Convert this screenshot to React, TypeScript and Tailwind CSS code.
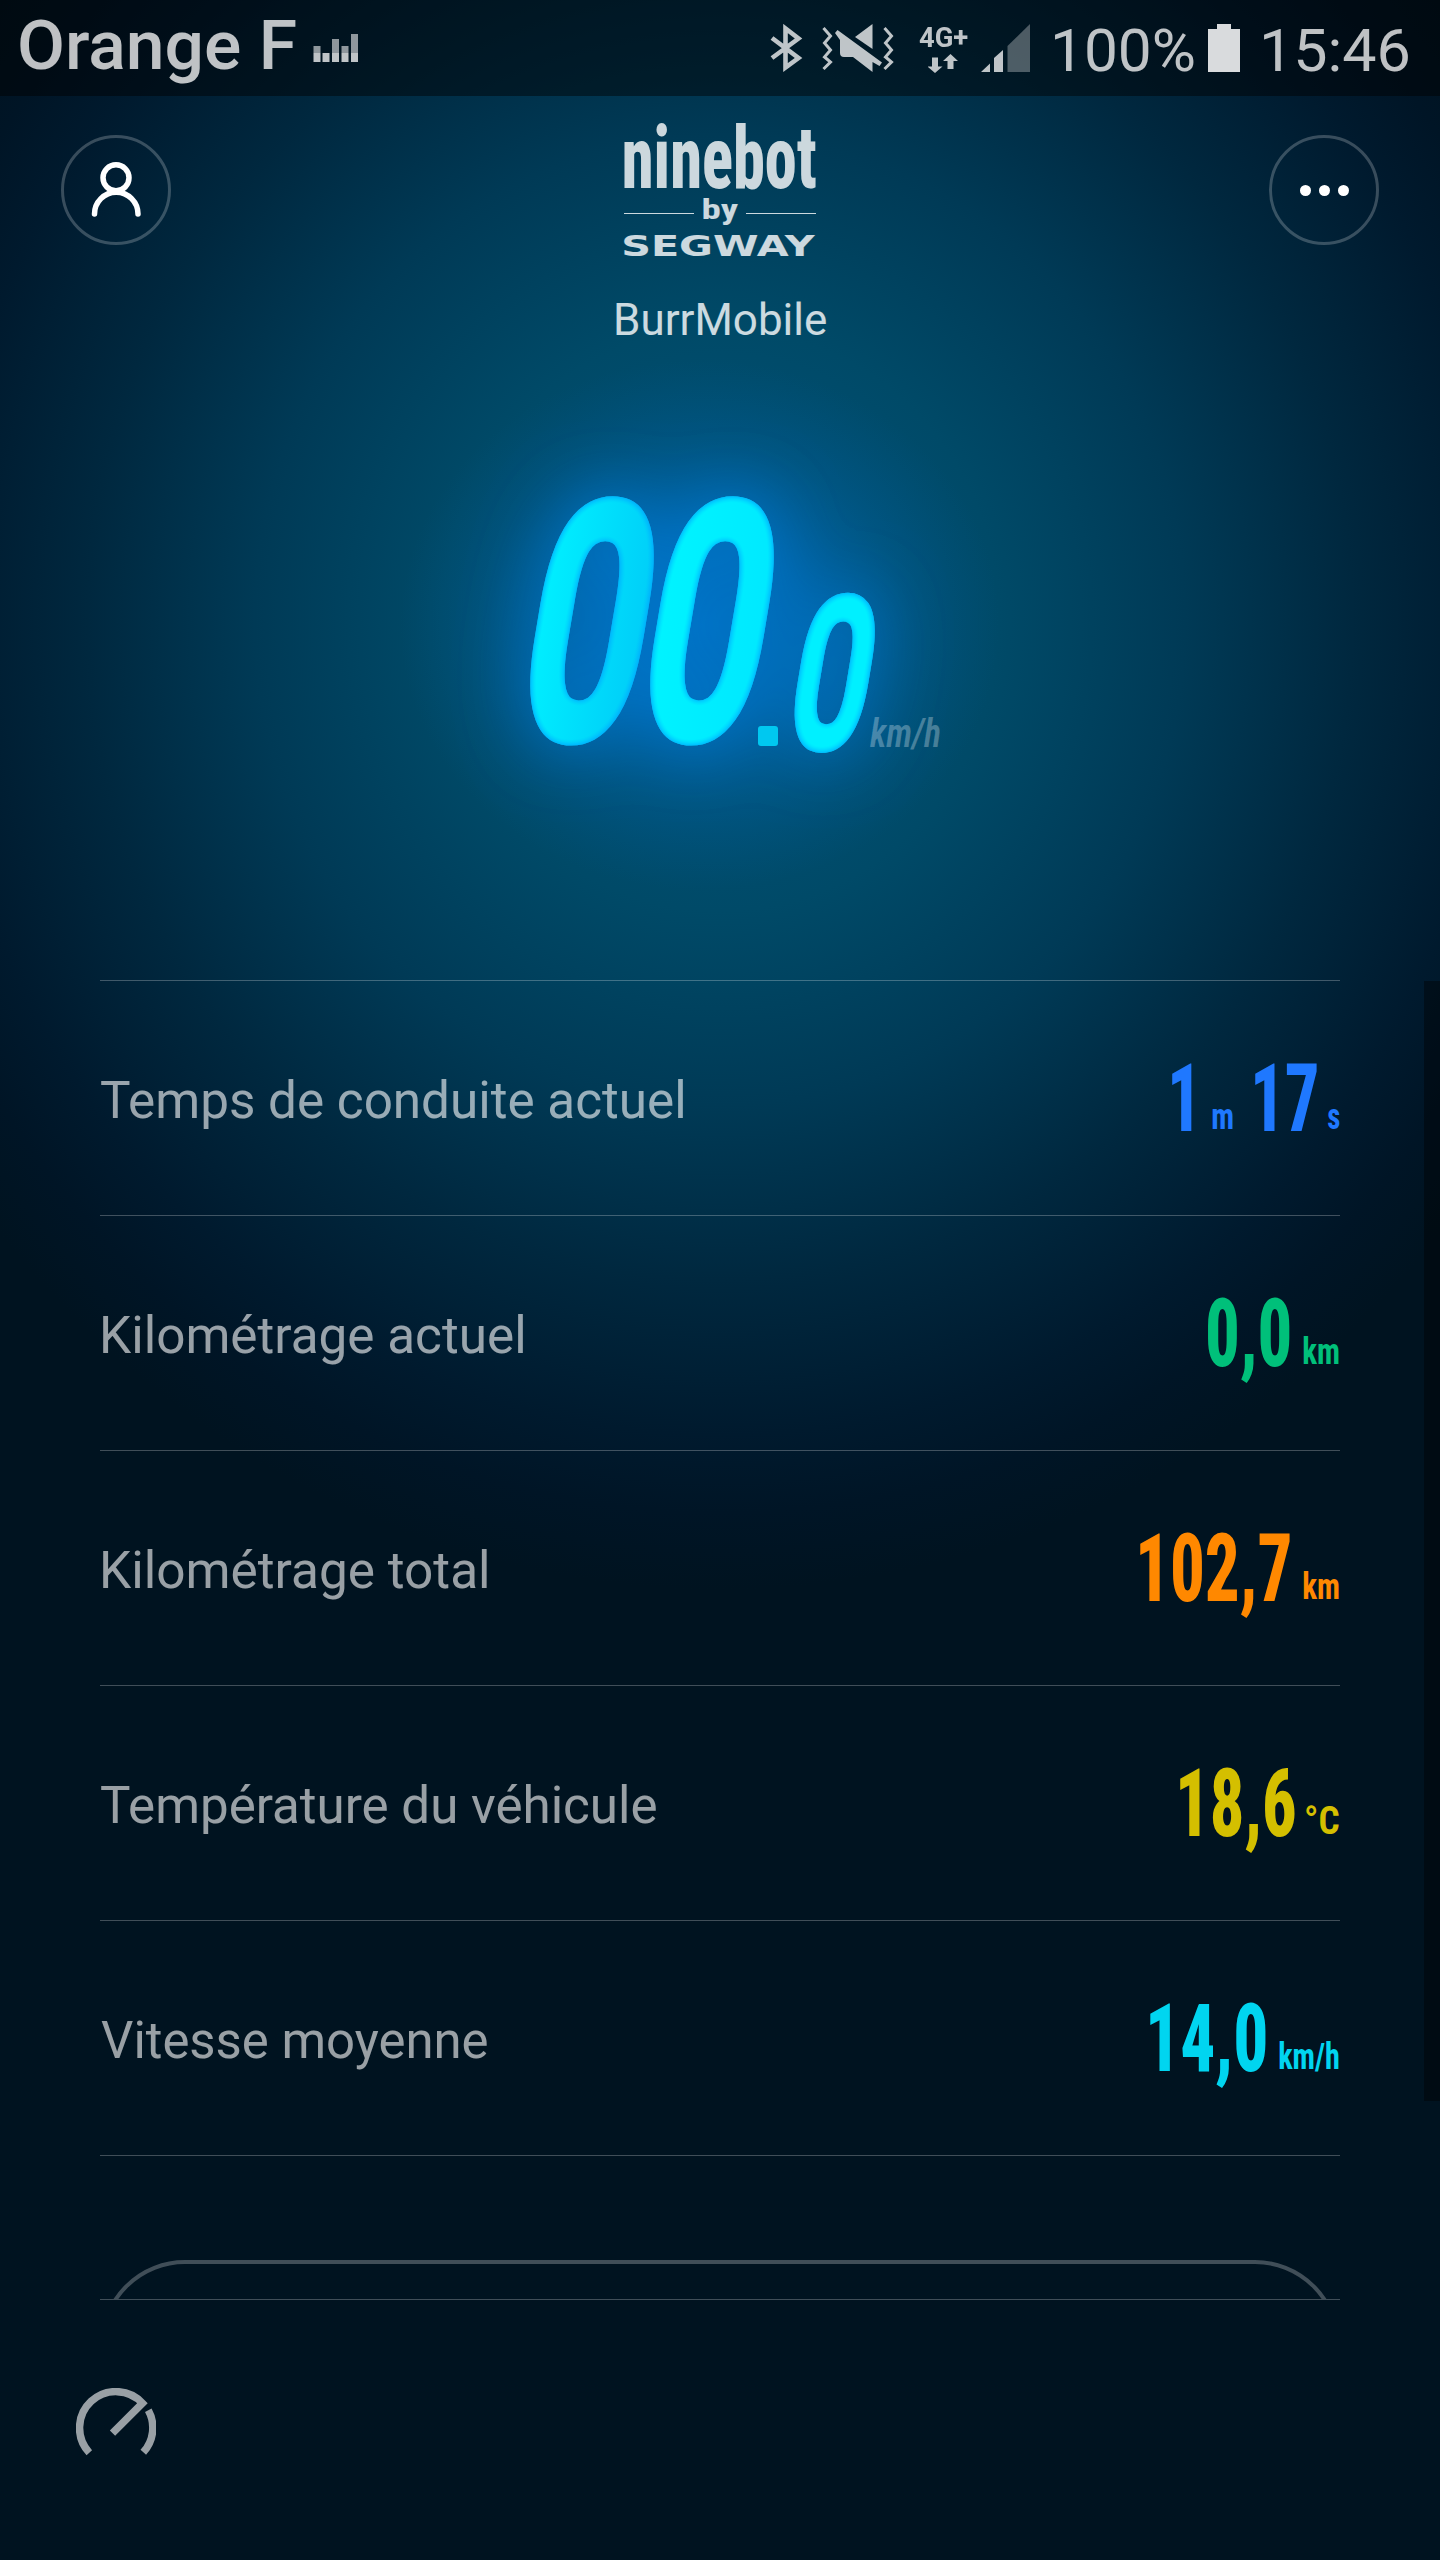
import { useLayoutEffect, useRef } from 'react'

type InkProps = { text: string; width: number; className?: string }

/** Text whose visible glyphs are stretched to fill exactly `width` pixels. */
function Ink({ text, width, className = '' }: InkProps) {
  const ref = useRef<HTMLSpanElement>(null)
  useLayoutEffect(() => {
    const el = ref.current
    if (!el) return
    const cs = getComputedStyle(el)
    const ctx = document.createElement('canvas').getContext('2d')
    if (!ctx) return
    ctx.font = `${cs.fontStyle} ${cs.fontWeight} ${cs.fontSize} ${cs.fontFamily}`
    const m = ctx.measureText(text)
    const left = -m.actualBoundingBoxLeft
    const scale = width / (m.actualBoundingBoxRight - left)
    el.style.transform = `translateX(${-left * scale}px) scaleX(${scale})`
  }, [text, width])
  return (
    <span className={`block leading-none ${className}`} style={{ width }}>
      <span ref={ref} className="inline-block origin-left whitespace-pre">
        {text}
      </span>
    </span>
  )
}

function StatusBar() {
  return (
    <div className="flex h-24 items-start bg-black/45 pl-5 pr-8 font-['Roboto',sans-serif] text-white/75">
      <Ink text="Orange F" width={276} className="mt-[11px] text-[69px] font-medium" />
      <svg className="ml-[17px] mt-[34px] h-7 w-[46px]" viewBox="0 0 46 28" fill="currentColor">
        <path d="M.5 12h7v7h-7zM19 5h7v14h-7zM28.500 12h7v7h-7zM38 0h7v19h-7z" opacity=".75" />
        <path d="M.5 19h7v9h-7zM9.500 19h7v9h-7zM19 19h7v9h-7zM28.500 19h7v9h-7zM38 19h7v9h-7z" />
      </svg>
      <div className="ml-auto flex items-start">
        <svg className="mt-6 h-12 w-[33px]" viewBox="0 0 33 48" fill="none" stroke="currentColor" strokeWidth="4.600">
          <path d="M2 14 28.500 34 15.500 43.500V4.500L28.500 14.500 2 34" />
        </svg>
        <svg className="ml-[19px] mt-6 h-12 w-[72px]" viewBox="0 0 72 48" fill="currentColor">
          <g fill="none" stroke="currentColor" strokeWidth="3">
            <path d="m1.500 4 7 8-6 7 6 7-6 7 6 5-7 7" />
            <path d="m62.500 4 7 8-6 7 6 7-6 7 6 5-7 7" />
          </g>
          <path d="M50.500 0v25L33 13z" />
          <path d="M13 9 15.500 6 60 38.500 57.500 42l-7-4v10L31 33H22q-4 0-4-4V16z" />
        </svg>
        <div className="ml-[25px] mt-6 flex w-[49px] flex-col">
          <Ink text="4G+" width={49} className="text-[28px] font-bold" />
          <svg className="ml-[9px] mt-[2px] h-[19px] w-[30px]" viewBox="0 0 30 19" fill="currentColor">
            <path d="M4 3.500h6v9h4.500L7 19-.500 12.500H4zM19.500 15V7H15l7.500-7L30 7h-4.500v8z" />
          </svg>
        </div>
        <svg className="ml-[13px] mt-6 h-12 w-[49px]" viewBox="0 0 49 48" fill="currentColor">
          <path d="M0 48 9 39.500V48zM13 48V34l9-8v22z" />
          <path d="M26.500 48V22L49 0v48z" opacity=".4" />
        </svg>
        <Ink text="100%" width={139} className="ml-[25px] mt-[21px] text-[60px]" />
        <svg className="ml-[14px] mt-6 h-12 w-8 text-white/85" viewBox="0 0 32 48" fill="currentColor">
          <path d="M9 0h14v5h9v43H0V5h9z" />
        </svg>
        <Ink text="15:46" width={144} className="ml-6 mt-[21px] text-[60px]" />
      </div>
    </div>
  )
}

function Logo() {
  return (
    <div className="flex w-48 flex-col font-['Roboto_Condensed',sans-serif] text-white/80">
      <Ink text="ninebot" width={192} className="mt-[19px] text-[87px] font-extrabold" />
      <div className="-mt-[5px] flex items-start justify-between">
        <div className="mt-[16px] h-px w-[70px] bg-white/80" />
        <Ink text="by" width={35} className="text-[27px] font-bold" />
        <div className="mt-[16px] h-px w-[70px] bg-white/80" />
      </div>
      <Ink text="SEGWAY" width={192} className="mt-2 font-['DejaVu_Sans',sans-serif] text-[29px] font-bold" />
    </div>
  )
}

function Header() {
  return (
    <header className="relative z-10 flex h-[246px] items-start justify-between px-[61px]">
      <button className="mt-[39px] grid size-[110px] place-items-center rounded-full border-[3px] border-white/[.22]">
        <svg className="h-14 w-[50px]" viewBox="0 0 50 56" fill="none" stroke="#fff" strokeWidth="5.500">
          <circle cx="25" cy="15.800" r="13" />
          <path d="M3.500 52a21.500 21.500 0 0 1 43.500 0" strokeLinecap="round" />
        </svg>
      </button>
      <div className="flex flex-col items-center">
        <Logo />
        <Ink text="BurrMobile" width={210} className="ml-0.5 mt-[37px] font-['Roboto',sans-serif] text-[44px] text-white/80" />
      </div>
      <button className="mt-[39px] flex size-[110px] items-center justify-center gap-2 rounded-full border-[3px] border-white/[.22]">
        <span className="size-[11px] rounded-full bg-white" />
        <span className="size-[11px] rounded-full bg-white" />
        <span className="size-[11px] rounded-full bg-white" />
      </button>
    </header>
  )
}

type DigitProps = { cx: number; base: number; size: number; width: number; fill: string; stroke: number }

/** One slanted neon digit, centred on cx and standing on base. */
function Digit({ cx, base, size, width, fill, stroke }: DigitProps) {
  const ref = useRef<SVGTextElement>(null)
  useLayoutEffect(() => {
    const ctx = document.createElement('canvas').getContext('2d')
    if (!ctx || !ref.current) return
    ctx.font = `400 ${size}px "Roboto"`
    const m = ctx.measureText('0')
    const left = -m.actualBoundingBoxLeft
    const scale = (width - stroke) / (m.actualBoundingBoxRight - left)
    const x = -(width - stroke) / 2 - left * scale
    ref.current.setAttribute('transform', `translate(${cx} ${base}) skewX(-9.500) translate(${x} 0) scale(${scale} 1)`)
  }, [cx, base, size, width, stroke])
  return (
    <text
      ref={ref}
      fontSize={size}
      fill={fill}
      stroke={fill}
      strokeWidth={stroke}
      strokeLinejoin="round"
      vectorEffect="non-scaling-stroke"
      className="font-['Roboto',sans-serif] font-normal"
    >
      0
    </text>
  )
}

function Digits() {
  return (
    <>
      <Digit cx={573.5} base={731.500} size={311} width={117} stroke={19} fill="url(#tubeA)" />
      <Digit cx={693.5} base={731.500} size={311} width={117} stroke={19} fill="url(#tubeB)" />
      <Digit cx={823} base={743.500} size={200} width={74} stroke={12} fill="#00f0ff" />
    </>
  )
}

function Speed() {
  return (
    <div className="h-[638px]">
      <svg className="h-full w-full overflow-visible" viewBox="0 342 1440 638">
        <defs>
          <linearGradient id="tubeA" x1="0" x2="1">
            <stop offset="0" stopColor="#00f0ff" />
            <stop offset="1" stopColor="#00cdf8" />
          </linearGradient>
          <linearGradient id="tubeB" x1="0" x2="1">
            <stop offset="0" stopColor="#00f4ff" />
            <stop offset="1" stopColor="#00e8ff" />
          </linearGradient>
          <radialGradient id="halo">
            <stop offset="0" stopColor="#0074cc" stopOpacity=".8" />
            <stop offset=".35" stopColor="#0070c4" stopOpacity=".6" />
            <stop offset=".7" stopColor="#0068b0" stopOpacity=".24" />
            <stop offset="1" stopColor="#0060a0" stopOpacity="0" />
          </radialGradient>
          <filter id="glow" x="-60%" y="-60%" width="220%" height="220%">
            <feGaussianBlur stdDeviation="34" in="SourceAlpha" result="a" />
            <feFlood floodColor="#0078d0" />
            <feComposite in2="a" operator="in" />
          </filter>
          <filter id="tube" x="-10%" y="-10%" width="120%" height="120%">
            <feGaussianBlur in="SourceAlpha" stdDeviation="5" />
            <feComponentTransfer result="rim">
              <feFuncA type="linear" slope="-1.700" intercept="1.550" />
            </feComponentTransfer>
            <feFlood floodColor="#00a2ff" />
            <feComposite in2="rim" operator="in" />
            <feComposite in2="SourceAlpha" operator="in" result="edge" />
            <feMerge>
              <feMergeNode in="SourceGraphic" />
              <feMergeNode in="edge" />
            </feMerge>
          </filter>
        </defs>
        <ellipse cx="700" cy="625" rx="300" ry="265" fill="url(#halo)" />
        <g filter="url(#glow)">
          <Digits />
        </g>
        <g filter="url(#tube)">
          <Digits />
        </g>
        <rect x="758" y="726" width="20" height="20" rx="3" fill="#00c8f0" />
        <text
          x="870"
          y="747"
          fontSize="41"
          textLength="71"
          lengthAdjust="spacingAndGlyphs"
          fill="#fff"
          fillOpacity=".28"
          className="font-['Roboto_Condensed',sans-serif] font-semibold italic"
        >
          km/h
        </text>
      </svg>
    </div>
  )
}

type Part = { value: string; valueWidth: number; unit: string; unitWidth: number; gap: number }
type RowProps = { label: string; labelWidth: number; start: string; color: string; parts: Part[]; end: string; unitSize?: string }

const rows: RowProps[] = [
  {
    label: 'Temps de conduite actuel',
    labelWidth: 582,
    start: 'ml-px',
    color: 'text-[#1f78ff]',
    end: 'mr-0',
    parts: [
      { value: '1', valueWidth: 20, unit: 'm', unitWidth: 20.5, gap: 20 },
      { value: '17', valueWidth: 62, unit: 's', unitWidth: 12, gap: 11.5 },
    ],
  },
  {
    label: 'Kilométrage actuel',
    labelWidth: 420,
    start: 'ml-[3px]',
    color: 'text-[#00c07a]',
    end: 'mr-[1.5px]',
    parts: [{ value: '0,0', valueWidth: 82, unit: 'km', unitWidth: 35.5, gap: 13 }],
  },
  {
    label: 'Kilométrage total',
    labelWidth: 384,
    start: 'ml-[3px]',
    color: 'text-[#ff8800]',
    end: 'mr-[1.5px]',
    parts: [{ value: '102,7', valueWidth: 150, unit: 'km', unitWidth: 35.5, gap: 13 }],
  },
  {
    label: 'Température du véhicule',
    labelWidth: 555,
    start: 'ml-px',
    color: 'text-[#d4bf00]',
    end: 'mr-px',
    unitSize: 'text-[38px] mt-[116px]',
    parts: [{ value: '18,6', valueWidth: 115, unit: '°C', unitWidth: 33, gap: 11 }],
  },
  {
    label: 'Vitesse moyenne',
    labelWidth: 386,
    start: 'ml-px',
    color: 'text-[#00d5f0]',
    end: 'mr-[1.5px]',
    parts: [{ value: '14,0', valueWidth: 116, unit: 'km/h', unitWidth: 59.5, gap: 13 }],
  },
]

function Row({ label, labelWidth, start, color, parts, end, unitSize = 'text-[36px] mt-[118px]' }: RowProps) {
  return (
    <li className="flex h-[235px] items-start justify-between border-b border-white/25">
      <Ink text={label} width={labelWidth} className={`mt-[94px] font-['Roboto',sans-serif] text-[52px] text-white/60 ${start}`} />
      <div className={`flex items-start gap-[22px] font-['Roboto_Condensed',sans-serif] font-bold ${color} ${end}`}>
        {parts.map((p) => (
          <div key={p.unit} className="flex items-start" style={{ gap: p.gap }}>
            <Ink text={p.value} width={p.valueWidth} className="mt-[70px] text-[95px] font-extrabold" />
            <Ink text={p.unit} width={p.unitWidth} className={unitSize} />
          </div>
        ))}
      </div>
    </li>
  )
}

export default function App() {
  return (
    <div className="h-[2560px] w-[1440px] overflow-hidden bg-[#001320] bg-[radial-gradient(930px_970px_at_720px_620px,#005580_0%,#004a68_30%,#003a56_50%,#00283f_68%,#001a2e_84%,#001526_92%,#001320_100%)]">
      <StatusBar />
      <Header />
      <Speed />
      <main className="flex h-[1319px] overflow-hidden pl-[100px]">
        <div className="w-[1240px]">
          <ul className="border-t border-white/25">
            {rows.map((r) => (
              <Row key={r.label} {...r} />
            ))}
          </ul>
          <button className="mt-[104px] block h-[170px] w-full rounded-full border-4 border-white/25" />
        </div>
        <div className="ml-auto mt-px h-[1120px] w-4 bg-black/40" />
      </main>
      <footer className="mx-[100px] border-t border-white/25">
        <svg className="-ml-6 mt-[88px] h-[68px] w-20" viewBox="0 0 80 68" fill="none" stroke="#fff" strokeOpacity=".6" strokeWidth="7.500">
          <path d="M13.300 64.700A36.300 36.300 0 1 1 66.500 15.200L36.500 45.200" />
          <path d="M72.300 22.300A36.300 36.300 0 0 1 67.300 64.300" />
        </svg>
      </footer>
    </div>
  )
}
